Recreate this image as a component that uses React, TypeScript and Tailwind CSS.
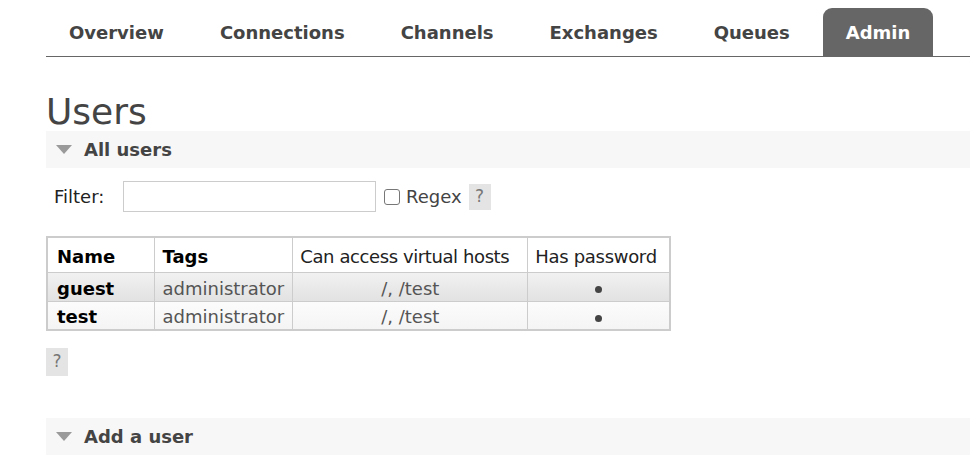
import React from 'react';

const tabs = ['Overview', 'Connections', 'Channels', 'Exchanges', 'Queues', 'Admin'];

const users = [
  { name: 'guest', tags: 'administrator', vhosts: '/, /test', password: true },
  { name: 'test', tags: 'administrator', vhosts: '/, /test', password: true },
];

function Triangle() {
  return (
    <svg width="16" height="9" viewBox="0 0 16 9" className="shrink-0">
      <polygon points="0,0 16,0 8,9" fill="#9a9a9a" />
    </svg>
  );
}

function SectionHeader({ title }: { title: string }) {
  return (
    <div className="flex items-center h-[37px] bg-[#f7f7f7] pl-[10px] gap-[12px]">
      <Triangle />
      <span className="font-bold text-[18px] text-[#444]">{title}</span>
    </div>
  );
}

function Help({ className = '' }: { className?: string }) {
  return (
    <span
      className={`inline-flex items-center justify-center w-[22px] bg-[#e4e4e4] text-[#777] text-[17px] ${className}`}
    >
      ?
    </span>
  );
}

export default function App() {
  return (
    <div
      className="w-[970px] h-[462px] overflow-hidden bg-white pl-[46px] text-[#444]"
      style={{ fontFamily: '"DejaVu Sans", Verdana, sans-serif' }}
    >
      <ul className="flex gap-[10px] pt-[8px] border-b border-[#666]">
        {tabs.map((t) => (
          <li
            key={t}
            className={
              t === 'Admin'
                ? 'h-[48px] px-[23px] flex items-center font-bold text-[18px] bg-[#666] text-white rounded-t-[9px]'
                : 'h-[48px] px-[23px] flex items-center font-bold text-[18px] text-[#444]'
            }
          >
            {t}
          </li>
        ))}
      </ul>

      <h1 className="text-[36px] leading-[37px] text-[#444] pt-[36px] pb-[1px]">Users</h1>

      <SectionHeader title="All users" />

      <div className="flex items-center h-[57px] pl-[8px] text-[18px] text-[#222]">
        <span className="w-[69px]">Filter:</span>
        <input className="w-[253px] h-[31px] border border-[#ccc] bg-white" />
        <span className="ml-[8px] w-[16px] h-[16px] border border-[#777] rounded-[3px] bg-white" />
        <span className="ml-[6px] text-[#444]">Regex</span>
        <Help className="ml-[7px] h-[26px]" />
      </div>

      <table className="mt-[11px] border-collapse border-2 border-[#ccc] text-[18px] leading-[22px] whitespace-nowrap">
        <thead>
          <tr className="h-[35px] bg-white">
            <th className="w-[107px] border border-[#ccc] px-[9px] pt-[4px] text-left font-bold text-black">Name</th>
            <th className="w-[138px] border border-[#ccc] px-[8px] pt-[4px] text-left font-bold text-black">Tags</th>
            <th className="w-[235px] border border-[#ccc] px-[7px] pt-[4px] text-left font-normal text-[#222] tracking-[-0.4px]">
              Can access virtual hosts
            </th>
            <th className="w-[142px] border border-[#ccc] px-[7px] pt-[4px] text-left font-normal text-[#222] tracking-[-0.3px]">
              Has password
            </th>
          </tr>
        </thead>
        <tbody>
          {users.map((u, i) => (
            <tr
              key={u.name}
              className={
                i === 0
                  ? 'h-[29px] bg-gradient-to-b from-[#f2f2f2] to-[#e2e2e2]'
                  : 'h-[29px] bg-gradient-to-b from-[#fcfcfc] to-[#f4f4f4]'
              }
            >
              <td className="border border-[#ccc] px-[9px] pt-[4px] font-bold text-black">{u.name}</td>
              <td className="border border-[#ccc] px-[8px] pt-[4px] text-[#555]">{u.tags}</td>
              <td className="border border-[#ccc] px-[9px] pt-[4px] text-center text-[#555]">{u.vhosts}</td>
              <td className="border border-[#ccc] px-[9px] pt-[4px] text-center">
                {u.password && <span className="inline-block w-[7px] h-[7px] rounded-full bg-[#444] align-middle" />}
              </td>
            </tr>
          ))}
        </tbody>
      </table>

      <div className="mt-[17px] flex">
        <Help className="h-[28px]" />
      </div>

      <div className="mt-[42px]">
        <SectionHeader title="Add a user" />
      </div>
    </div>
  );
}
